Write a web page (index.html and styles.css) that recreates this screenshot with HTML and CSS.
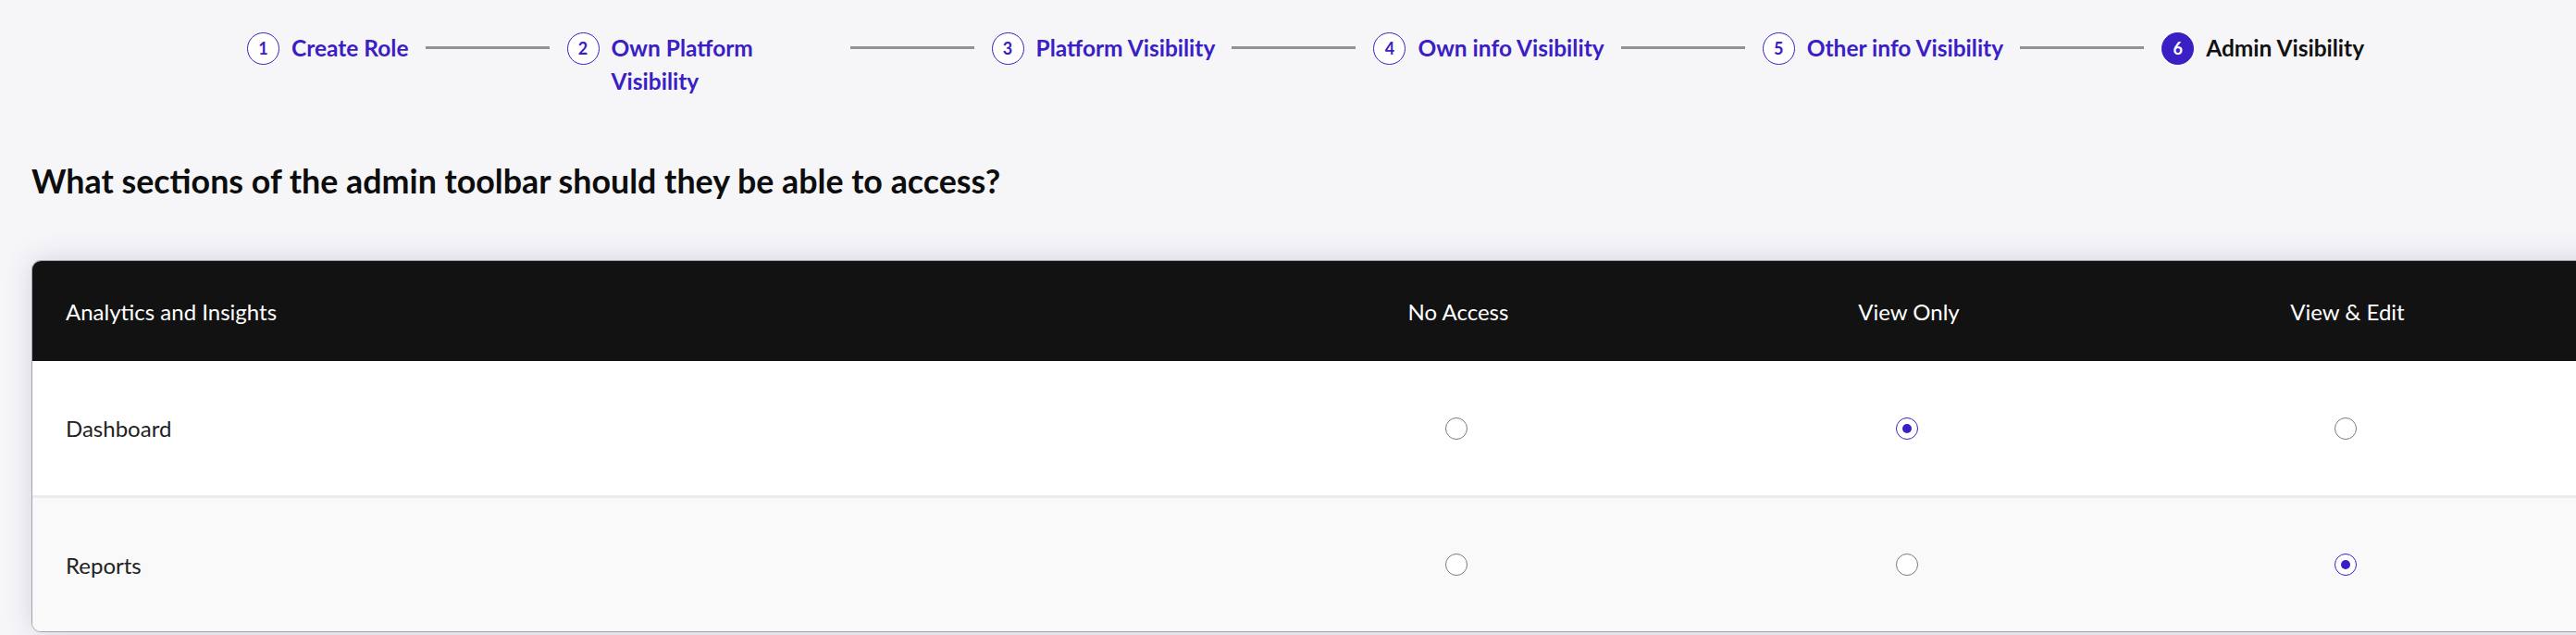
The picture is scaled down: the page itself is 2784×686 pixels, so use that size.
FILE: index.html
```html
<!DOCTYPE html>
<html lang="en">
<head>
<meta charset="utf-8">
<title>Admin Visibility</title>
<link rel="stylesheet" href="styles.css">
</head>
<body>
<div class="page">
  <nav class="stepper">
    <div class="step">
      <span class="step-num">1</span>
      <span class="step-label">Create Role</span>
    </div>
    <span class="connector"></span>
    <div class="step">
      <span class="step-num">2</span>
      <span class="step-label">Own Platform Visibility</span>
    </div>
    <span class="connector"></span>
    <div class="step">
      <span class="step-num">3</span>
      <span class="step-label">Platform Visibility</span>
    </div>
    <span class="connector"></span>
    <div class="step">
      <span class="step-num">4</span>
      <span class="step-label">Own info Visibility</span>
    </div>
    <span class="connector"></span>
    <div class="step">
      <span class="step-num">5</span>
      <span class="step-label">Other info Visibility</span>
    </div>
    <span class="connector"></span>
    <div class="step step-active">
      <span class="step-num">6</span>
      <span class="step-label">Admin Visibility</span>
    </div>
  </nav>

  <h1 class="question">What sections of the admin toolbar should they be able to access?</h1>

  <div class="access-table">
    <div class="row row-head">
      <div class="cell cell-name">Analytics and Insights</div>
      <div class="cell cell-opt">No Access</div>
      <div class="cell cell-opt">View Only</div>
      <div class="cell cell-opt">View &amp; Edit</div>
      <div class="cell"></div>
    </div>
    <div class="row row-odd">
      <div class="cell cell-name">Dashboard</div>
      <div class="cell cell-opt"><span class="radio"></span></div>
      <div class="cell cell-opt"><span class="radio radio-checked"></span></div>
      <div class="cell cell-opt"><span class="radio"></span></div>
      <div class="cell"></div>
    </div>
    <div class="row row-even">
      <div class="cell cell-name">Reports</div>
      <div class="cell cell-opt"><span class="radio"></span></div>
      <div class="cell cell-opt"><span class="radio"></span></div>
      <div class="cell cell-opt"><span class="radio radio-checked"></span></div>
      <div class="cell"></div>
    </div>
  </div>
</div>
</body>
</html>
```

FILE: styles.css
```css
html, body {
  margin: 0;
  padding: 0;
}

body {
  background: #f6f6f9;
  font-family: Lato, "Open Sans", "Liberation Sans", sans-serif;
  color: #111111;
  overflow: hidden;
}

.page {
  width: 2784px;
  height: 686px;
  overflow: hidden;
}

/* ---------- stepper ---------- */
.stepper {
  display: flex;
  align-items: flex-start;
  padding: 34px 0 0 267px;
}

.step {
  display: flex;
  align-items: flex-start;
  gap: 13px;
}

.step-num {
  box-sizing: border-box;
  width: 35px;
  height: 35px;
  flex: none;
  border: 1.5px solid #3a20c4;
  border-radius: 50%;
  display: flex;
  align-items: center;
  justify-content: center;
  font-size: 18px;
  font-weight: 700;
  color: #3a20c4;
  background: #ffffff;
  margin-top: 0.5px;
}

.step-label {
  max-width: 240px;
  font-size: 24.5px;
  font-weight: 700;
  line-height: 36px;
  color: #3a20c4;
}

.step-active .step-num {
  background: #3a20c4;
  color: #ffffff;
}

.step-active .step-label {
  color: #111111;
}

.connector {
  flex: none;
  width: 134px;
  height: 3px;
  background: #929292;
  margin: 16px 19px 0 18px;
}

/* ---------- question ---------- */
.question {
  margin: 68px 0 0 34px;
  font-size: 35.8px;
  font-weight: 700;
  line-height: 43px;
  color: #0d0d0d;
}

/* ---------- table ---------- */
.access-table {
  width: 2800px;
  margin: 64px 0 0 34px;
  border: 1px solid #a3a3a8;
  border-radius: 10px;
  overflow: hidden;
  background: #ffffff;
  box-shadow: 0 0 30px rgba(60, 50, 120, 0.18);
}

.row {
  display: grid;
  grid-template-columns: 1300px 482px 492px 456px 1fr;
  align-items: center;
  font-size: 24px;
}

.row-head {
  height: 108px;
  background: #121212;
  color: #ffffff;
}

.row-odd {
  height: 145px;
  background: #ffffff;
  color: #222222;
  border-bottom: 3px solid #ebebed;
}

.row-even {
  height: 144px;
  background: #f9f9f9;
  color: #222222;
}

.cell-name {
  padding-left: 36px;
}

.cell-opt {
  display: flex;
  justify-content: center;
  align-items: center;
}

.radio {
  box-sizing: border-box;
  width: 24px;
  height: 24px;
  border: 1.5px solid #7a7a7a;
  border-radius: 50%;
  background: #ffffff;
  display: flex;
  align-items: center;
  justify-content: center;
  margin-right: 5px;
}

.radio-checked {
  border-color: #3a20c4;
}

.radio-checked::after {
  content: "";
  width: 10px;
  height: 10px;
  border-radius: 50%;
  background: #3a20c4;
}
```
